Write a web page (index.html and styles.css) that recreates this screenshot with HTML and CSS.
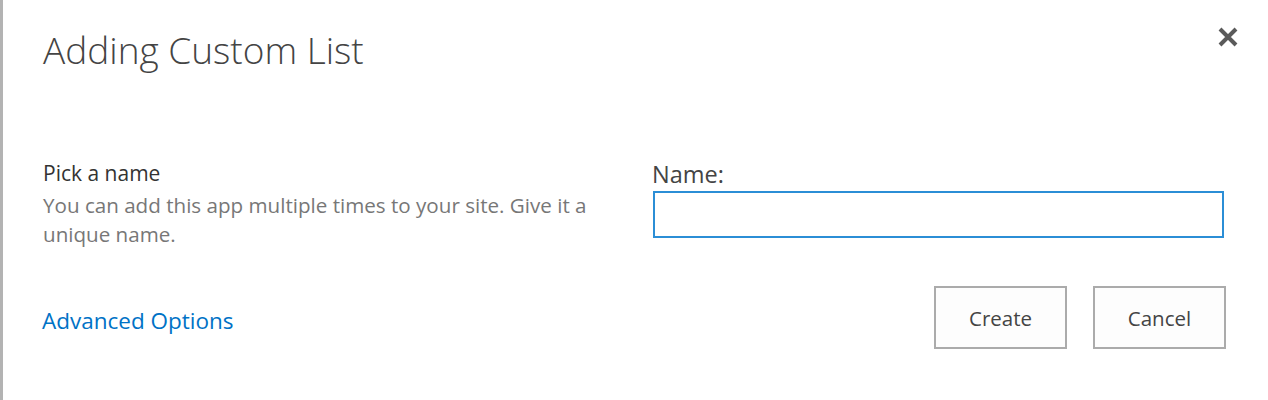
FILE: index.html
```html
<!DOCTYPE html>
<html lang="en">
<head>
<meta charset="utf-8">
<title>Adding Custom List</title>
<link rel="stylesheet" href="styles.css">
</head>
<body>
<div class="dialog">
  <div class="header">
    <h1 class="title">Adding Custom List</h1>
    <button class="close" aria-label="Close">
      <svg width="22" height="22" viewBox="0 0 22 22"><path d="M3 3 L19 19 M19 3 L3 19" stroke="#5a5a5a" stroke-width="4" stroke-linecap="butt"/></svg>
    </button>
  </div>
  <div class="form">
    <div class="desc">
      <div class="desc-title">Pick a name</div>
      <div class="desc-text">You can add this app multiple times to your site. Give it a unique name.</div>
    </div>
    <div class="field">
      <label class="field-label" for="name">Name:</label>
      <input class="field-input" id="name" type="text">
    </div>
  </div>
  <div class="footer">
    <a class="advanced" href="#">Advanced Options</a>
    <div class="buttons">
      <button class="btn">Create</button>
      <button class="btn">Cancel</button>
    </div>
  </div>
</div>
</body>
</html>
```
FILE: styles.css
```css
html, body {
  margin: 0;
  padding: 0;
  background: #ffffff;
}
body {
  font-family: "Open Sans", "Noto Sans", sans-serif;
  width: 1268px;
  height: 400px;
  overflow: hidden;
}
.dialog {
  box-sizing: border-box;
  height: 400px;
  border-left: 3px solid #b3b3b3;
  padding: 0 42px 0 40px;
}
.header {
  display: flex;
  justify-content: space-between;
  align-items: flex-start;
  padding-top: 26px;
}
.title {
  margin: 0;
  font-weight: 300;
  font-size: 37px;
  line-height: 48px;
  color: #444444;
}
.close {
  border: 0;
  background: transparent;
  padding: 0;
  margin: 0 -13px 0 0;
  width: 22px;
  height: 22px;
  display: flex;
}
.form {
  display: grid;
  grid-template-columns: 609px 1fr;
  margin-top: 86px;
}
.desc-title {
  font-size: 21px;
  line-height: 26px;
  color: #333333;
}
.desc-text {
  font-size: 20.6px;
  line-height: 29px;
  color: #777777;
  width: 560px;
  margin-top: 5px;
}
.field {
  display: flex;
  flex-direction: column;
}
.field-label {
  font-size: 23.5px;
  line-height: 28px;
  color: #444444;
  margin-bottom: 3px;
}
.field-input {
  box-sizing: border-box;
  height: 47px;
  width: 571px;
  border: 2px solid #2b8ed6;
  margin: 0 0 0 1px;
  outline: none;
}
.footer {
  display: flex;
  justify-content: space-between;
  align-items: center;
  margin-top: 37px;
}
.advanced {
  color: #0072c6;
  text-decoration: none;
  font-size: 22.5px;
  margin-left: -1px;
  position: relative;
  top: 3px;
}
.buttons {
  display: flex;
  gap: 26px;
}
.btn {
  box-sizing: border-box;
  width: 133px;
  height: 63px;
  border: 2px solid #ababab;
  background: #fdfdfd;
  font-family: "Open Sans", "Noto Sans", sans-serif;
  font-size: 20.5px;
  color: #444444;
}
```
